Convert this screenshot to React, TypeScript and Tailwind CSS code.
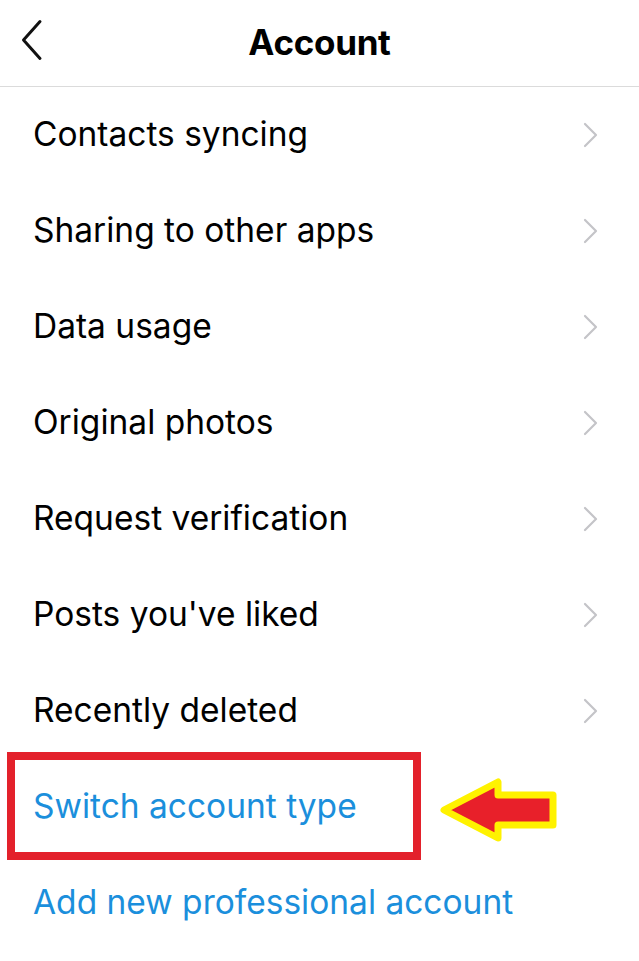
import React from "react";

const rows = [
  "Contacts syncing",
  "Sharing to other apps",
  "Data usage",
  "Original photos",
  "Request verification",
  "Posts you've liked",
  "Recently deleted",
];

function Chevron() {
  return (
    <svg width="16" height="26" viewBox="0 0 16 26" fill="none">
      <path d="M2 2 L13 13 L2 24" stroke="#c4c4c8" strokeWidth="2.2" strokeLinecap="round" strokeLinejoin="round" />
    </svg>
  );
}

export default function App() {
  return (
    <div className="relative w-[639px] h-[961px] bg-white overflow-hidden text-black" style={{ fontFamily: "Inter, 'Noto Sans', sans-serif" }}>
      {/* header */}
      <div className="relative flex items-center justify-center h-[87px] border-b border-[#dbdbdb]">
        <svg className="absolute left-[20px] top-[19px]" width="24" height="42" viewBox="0 0 24 42" fill="none">
          <path d="M20 2.5 L3.5 21 L20 39.5" stroke="#111" strokeWidth="3" strokeLinecap="round" strokeLinejoin="round" />
        </svg>
        <h1 className="text-[35px] font-bold tracking-[-0.3px] -mt-[2px]">Account</h1>
      </div>

      {/* list */}
      <div className="flex flex-col">
        {rows.map((r) => (
          <div key={r} className="flex items-center justify-between h-[96px] pl-[33px] pr-[40px]">
            <span className="text-[33.5px] leading-none">{r}</span>
            <Chevron />
          </div>
        ))}
        <div className="flex items-center h-[96px] pl-[33px]">
          <span className="text-[33.5px] leading-none text-[#1b8fdc]">Switch account type</span>
        </div>
        <div className="flex items-center h-[96px] pl-[33px]">
          <span className="text-[33.5px] leading-none text-[#1b8fdc]">Add new professional account</span>
        </div>
      </div>

      {/* annotation box */}
      <div className="absolute left-[7px] top-[752px] w-[414px] h-[108px] border-[8px] border-[#e3212b]" />

      {/* annotation arrow */}
      <svg className="absolute left-[436px] top-[776px]" width="124" height="68" viewBox="0 0 124 68">
        <path
          d="M8 34 L62 6 L62 19 L117 19 L117 49 L62 49 L62 62 Z"
          fill="#e8202a"
          stroke="#fff200"
          strokeWidth="7"
          strokeLinejoin="round"
        />
      </svg>
    </div>
  );
}
